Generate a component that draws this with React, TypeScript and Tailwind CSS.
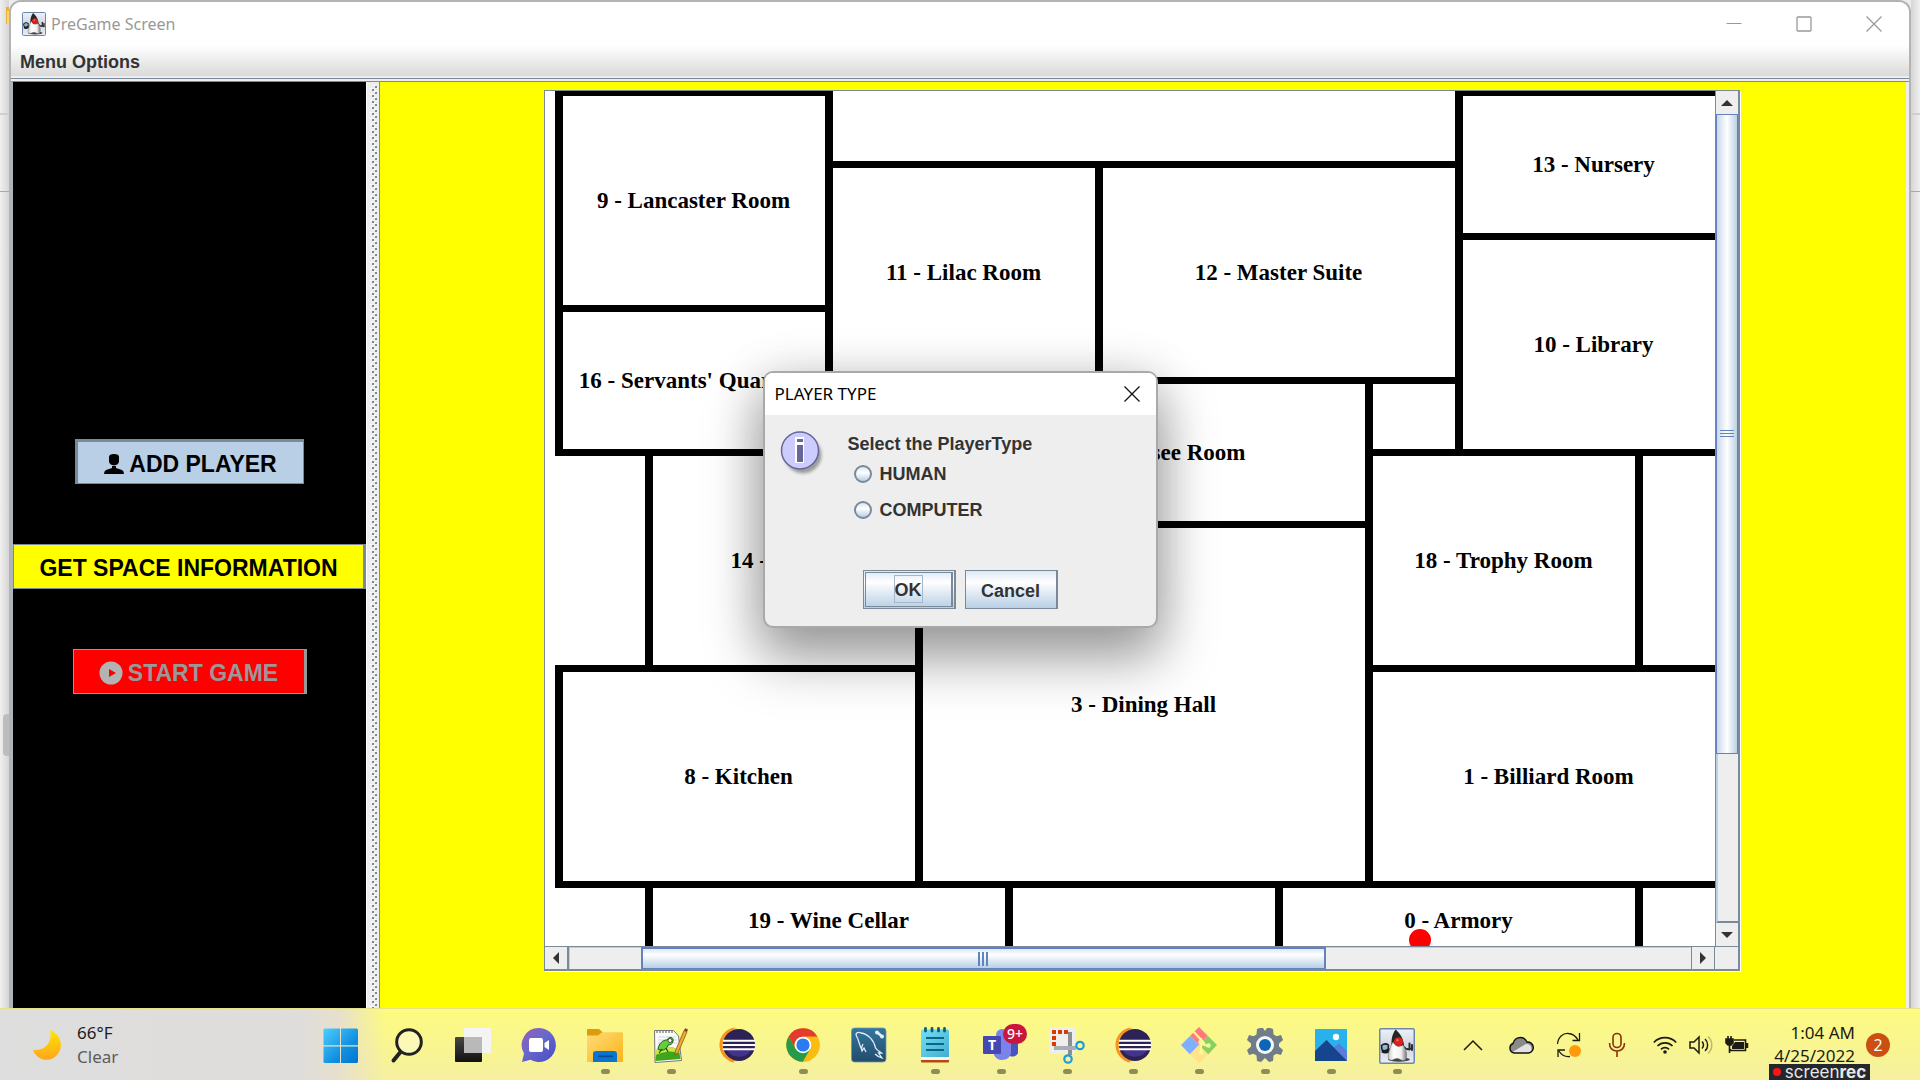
import React from "react";

type IconProps = { className?: string };

/* ---------- Java "Duke" icon ---------- */
function Duke({ className = "size-9" }: IconProps) {
  return (
    <svg viewBox="0 0 36 36" className={className} aria-hidden="true">
      <defs>
        <linearGradient id="dukeBg" x1="0" y1="0" x2="0" y2="1">
          <stop offset="0" stopColor="#eef1f7" />
          <stop offset="0.5" stopColor="#cfd5e2" />
          <stop offset="1" stopColor="#e9ecf3" />
        </linearGradient>
        <linearGradient id="dukeBelly" x1="0" y1="0" x2="1" y2="0">
          <stop offset="0" stopColor="#c9c9c9" />
          <stop offset="0.3" stopColor="#ffffff" />
          <stop offset="0.7" stopColor="#f1f1f1" />
          <stop offset="1" stopColor="#777" />
        </linearGradient>
      </defs>
      <rect x="0.75" y="0.75" width="34.5" height="34.5" rx="1.5" fill="url(#dukeBg)" stroke="#6d88a8" strokeWidth="1.5" />
      <ellipse cx="20" cy="31.5" rx="11" ry="2.2" fill="#444" />
      <path d="M2.5 17.500q3.500-3 7-.5l-.5 4.500q-3.500 2-6 .5z" fill="#8fb9d8" stroke="#1d1d1d" strokeWidth="1.500" />
      <path d="M3 23q5 3 10-3" stroke="#1d1d1d" strokeWidth="2.800" fill="none" />
      <path d="M24 18q4 5 8 2.500M30.500 15.500v6M33 17v5" stroke="#2a2a2a" strokeWidth="2" fill="none" strokeLinecap="round" />
      <path d="M16.500 1.500C14 5 12 10 12.500 18L25 20C25.500 12 21 5 16.500 1.500z" fill="#262626" />
      <path d="M14 14C11 19 8.500 26 9.500 31 13 34 15 30 18.500 30.500 21 30.500 23 34 27 31.500 28.500 26 27 21 24 17 20 19.500 16 18 14 14z" fill="url(#dukeBelly)" stroke="#666" strokeWidth="0.5" />
      <circle cx="19.500" cy="13.800" r="4.600" fill="#d9201c" />
      <circle cx="18.500" cy="12.300" r="1.300" fill="#f4645a" />
    </svg>
  );
}

/* ---------- Taskbar icons ---------- */
const box = "size-9 overflow-visible";

function StartIcon() {
  return (
    <svg viewBox="0 0 36 36" className={box}>
      <defs>
        <linearGradient id="win" gradientUnits="userSpaceOnUse" x1="0" y1="0" x2="36" y2="36">
          <stop offset="0" stopColor="#4fd0ff" />
          <stop offset="0.6" stopColor="#1090e0" />
          <stop offset="1" stopColor="#0072cf" />
        </linearGradient>
      </defs>
      <g fill="url(#win)">
        <path d="M1.500 .5H17v16.700H.5V1.500z" />
        <path d="M18 .5h16l1 1v15.700H18z" />
        <path d="M.5 18.500H17V35H1.500l-1-1z" />
        <path d="M18 18.500h17V34l-1 1H18z" />
      </g>
    </svg>
  );
}
function SearchIcon() {
  return (
    <svg viewBox="0 0 36 36" className={box} fill="none">
      <circle cx="20" cy="14" r="12.300" fill="#ffffff" fillOpacity=".35" stroke="#222" strokeWidth="3" />
      <path d="M11.500 24 4.500 32.500" stroke="#222" strokeWidth="4" strokeLinecap="round" />
    </svg>
  );
}
function TaskViewIcon() {
  return (
    <svg viewBox="0 0 36 36" className={box}>
      <defs>
        <linearGradient id="tv" x1="0" y1="0" x2="0" y2="1">
          <stop offset="0" stopColor="#474747" />
          <stop offset="1" stopColor="#111" />
        </linearGradient>
      </defs>
      <rect x="0" y="9" width="27" height="25" rx="1" fill="url(#tv)" />
      <rect x="9" y="0" width="27" height="25" rx="1" fill="#f4f4f4" />
      <rect x="9" y="9" width="18" height="16" fill="#b9b9b9" />
    </svg>
  );
}
function ChatIcon() {
  return (
    <svg viewBox="0 0 36 36" className={box}>
      <defs>
        <linearGradient id="chat" x1="0" y1="0" x2=".9" y2="1">
          <stop offset="0" stopColor="#9a5fae" />
          <stop offset="0.45" stopColor="#6a68cf" />
          <stop offset="1" stopColor="#4a4fc4" />
        </linearGradient>
      </defs>
      <path d="M18 0a17 17 0 1 1-8.500 31.800L1 34l2-8.500A17 17 0 0 1 18 0z" fill="url(#chat)" />
      <rect x="8" y="10" width="14" height="14" rx="2" fill="#fff" />
      <path d="M23.500 15l4.500-3v10l-4.500-3z" fill="#fff" />
    </svg>
  );
}
function ExplorerIcon() {
  return (
    <svg viewBox="0 0 36 36" className={box}>
      <defs>
        <linearGradient id="fold" x1="0" y1="0" x2="1" y2="1">
          <stop offset="0" stopColor="#ffdc78" />
          <stop offset="1" stopColor="#fbb418" />
        </linearGradient>
      </defs>
      <path d="M0 2a1 1 0 0 1 1-1h11l4 3.500V10H0z" fill="#dd9c0b" />
      <path d="M0 7.500h11l4-3.200h20a1 1 0 0 1 1 1V34H0z" fill="url(#fold)" />
      <path d="M6 34V26a3 3 0 0 1 3-3h18a3 3 0 0 1 3 3v8z" fill="#0a74cf" />
      <rect x="11" y="27.500" width="15" height="1.800" rx=".9" fill="#0a4c92" />
    </svg>
  );
}
function NotepadPlusIcon() {
  return (
    <svg viewBox="0 0 36 36" className={box}>
      <path d="M1.500 2.500h19l5 5.500 3 24.500-26.500 2z" fill="#fbfbfb" stroke="#777" />
      <path d="M4 3v2M7 3v2M10 3v2M13 3v2M16 3v2M19 3v2" stroke="#555" strokeWidth="1" />
      <path d="M5 9h18M5 12h19M5 15h19" stroke="#c5cdd8" strokeWidth=".8" />
      <path d="M3 22q11-7 23 0l1.500 9-25 2z" fill="#3fa51d" />
      <path d="M3 22q11-7 23 0l.5 3q-12-4-24 2z" fill="#c9e54a" />
      <path d="M5 21c1-6 5-9 9-9 2-4 7-3 6 1 0 3-3 4-5 4-1 4-5 6-8 5z" fill="#63cf3c" stroke="#174a12" strokeWidth=".9" />
      <circle cx="17" cy="12.500" r="2" fill="#fff" stroke="#222" strokeWidth=".7" />
      <path d="M9 21l-3 4M13 20l2 4" stroke="#174a12" strokeWidth="1.200" />
      <path d="M31 2.500l3 1.300L25 25l-3 2 .3-4z" fill="#f0a92c" stroke="#7a4a10" strokeWidth=".7" />
      <path d="M31 2.500l1-2.200 3 1.300-1 2.200z" fill="#7d3c3c" />
    </svg>
  );
}
function EclipseIcon() {
  return (
    <svg viewBox="0 0 36 36" className={box}>
      <path d="M18 .3A17 16.700 0 0 0 18 33.500A19 19 0 0 1 18 .3z" fill="#f7941e" />
      <path d="M15 .6A17 16.700 0 0 0 15 33.200" fill="none" stroke="#f7941e" strokeWidth="2.500" />
      <circle cx="20" cy="16.900" r="16" fill="#2c2255" />
      <path d="M8 22h24a13 11 0 0 1-24 0z" fill="#43338a" />
      <path d="M4 12.800h32M3.500 17h32.500M4 21.200h32" stroke="#fff" strokeWidth="2" />
    </svg>
  );
}
function ChromeIcon() {
  return (
    <svg viewBox="0 0 36 36" className={box}>
      <circle cx="18" cy="17" r="16.700" fill="#fbbc12" />
      <path d="M3.500 8.700A16.700 16.700 0 0 1 32.500 8.700H18A8.300 8.300 0 0 0 10.500 21z" fill="#e33b2e" />
      <path d="M3.500 8.700A16.700 16.700 0 0 0 18 33.700l7.300-12.500-14.500 0z" fill="#269a48" />
      <path d="M18 33.700A16.700 16.700 0 0 0 32.500 8.700H18l7.300 12.500z" fill="#fbbc12" />
      <circle cx="18" cy="17" r="8.300" fill="#fff" />
      <circle cx="18" cy="17" r="6.600" fill="#2a7cf0" />
    </svg>
  );
}
function MysqlIcon() {
  return (
    <svg viewBox="0 0 36 36" className={box} fill="none">
      <defs>
        <linearGradient id="mysql" x1="0" y1="0" x2="0" y2="1">
          <stop offset="0" stopColor="#34759e" />
          <stop offset="1" stopColor="#214d6b" />
        </linearGradient>
      </defs>
      <rect x=".5" y="0" width="34.500" height="34" rx="3" fill="url(#mysql)" stroke="#6f97b0" strokeWidth=".8" />
      <path d="M11 22C8 17 8 12 5.500 8 4 5 7 3.500 10 5c7 1 13 7 14.500 15 1 2 4 3.500 6 5l-3 0 3.500 5c-3-1-6-3-7-4M12 16c-1 2-2 5-1 7l2-3 2 4" stroke="#e3edf4" strokeWidth="1.300" />
      <path d="M26.500 4.500l5 4.500" stroke="#e3edf4" strokeWidth="2.600" />
      <circle cx="26" cy="4.500" r="2" fill="#e3edf4" />
      <circle cx="31" cy="8.500" r="2" fill="#e3edf4" />
    </svg>
  );
}
function NotepadIcon() {
  return (
    <svg viewBox="0 0 36 36" className={box}>
      <defs>
        <linearGradient id="np" x1="0" y1="0" x2="1" y2="1">
          <stop offset="0" stopColor="#72e0f4" />
          <stop offset="1" stopColor="#43add0" />
        </linearGradient>
      </defs>
      <path d="M4 30h28v3.500a1 1 0 0 1-1 1H5a1 1 0 0 1-1-1z" fill="#b54a0c" />
      <rect x="4" y="28" width="28" height="4" fill="#f5f5f5" />
      <path d="M4 3a1.500 1.500 0 0 1 1.500-1.500h25A1.500 1.500 0 0 1 32 3v26H4z" fill="url(#np)" />
      <path d="M9 10h18M9 16h18M9 22h18" stroke="#0b6584" strokeWidth="1.800" />
      <path d="M8.500 .5v2.500M15 .5v2.500M21.500 .5v2.500M27.500 .5v2.500" stroke="#0b5c79" strokeWidth="2.800" strokeLinecap="round" />
    </svg>
  );
}
function TeamsIcon() {
  return (
    <span className="relative">
      <svg viewBox="0 0 36 36" className={box}>
        <circle cx="19" cy="7" r="6" fill="#7b83eb" />
        <path d="M24 12h11v13a6 6 0 0 1-8 3z" fill="#4b53bc" />
        <path d="M11 12h17v13a9 8.500 0 0 1-17 2z" fill="#7b83eb" />
        <rect x="0" y="8" width="18" height="18" rx="1" fill="#4448b0" />
      </svg>
      <span className="absolute left-0 top-2 w-[18px] text-center font-['Noto_Sans'] text-sm leading-[18px] font-bold text-white">T</span>
      <span className="absolute -top-1 left-5 w-6 rounded-full bg-[#c8163c] text-center font-['Noto_Sans'] text-sm leading-5 font-medium text-white">9+</span>
    </span>
  );
}
function SnipIcon() {
  return (
    <svg viewBox="0 0 36 36" className={box} fill="none">
      <rect x="0" y="-1" width="27" height="27" rx="2" fill="#eeeeec" />
      <path d="M3 4h4M9 4h4M15 4h4M5 8v4M5 14v4" stroke="#d83b01" strokeWidth="4" />
      <path d="M19 6h2v21" stroke="#8a8f94" strokeWidth="4" />
      <path d="M7 18v2h20" stroke="#a9adb0" strokeWidth="4" />
      <circle cx="31" cy="17.500" r="3.700" stroke="#1c9be0" strokeWidth="2.200" />
      <circle cx="19" cy="31" r="3.700" stroke="#1c9be0" strokeWidth="2.200" />
    </svg>
  );
}
function GitIcon() {
  return (
    <svg viewBox="0 0 36 36" className={box}>
      <path d="M18-1l9 9-9 9-9-9z" fill="#ff7b7b" />
      <path d="M9 8l9 9-9 9.500L0 17z" fill="#7fb0ff" />
      <path d="M27 8l9 9-9 9.500-9-9.500z" fill="#85d062" />
      <path d="M18 17l9 9-9 9.500-9-9.500z" fill="#ffe28a" />
      <path d="M11 2l13 14M20 10v14M20 16l7 2" stroke="#fbf795" strokeWidth="2.200" />
      <circle cx="20" cy="14" r="2.600" fill="#fbf795" />
      <circle cx="27.500" cy="17.500" r="2.300" fill="#fbf795" />
      <circle cx="20" cy="24.500" r="2.500" fill="#fbf795" />
    </svg>
  );
}
function GearIcon() {
  return (
    <svg viewBox="0 0 36 36" className={box}>
      <path d="M13 0h3l2 3 2-3h3l3 1 .5 5.500 3 1.800L34 7l2 5-4 3.500v3L36 22l-2 5-4.500-1.300-3 1.800L26 33l-4 1-4-4-4 4-4-1-.5-5.500-3-1.800L2 27l-2-5 4-3.500v-3L0 12l2-5 4.500 1.300 3-1.800L10 1z" fill="#707c88" />
      <circle cx="18" cy="17" r="9" fill="#f7f7f7" />
      <circle cx="18" cy="17" r="6" fill="#0b66b8" />
    </svg>
  );
}
function PhotosIcon() {
  return (
    <svg viewBox="0 0 36 36" className={box}>
      <rect x="2" y="1" width="32" height="32" rx="1" fill="#28b1ea" />
      <path d="M15 24 26 15.500 34 23v10H15z" fill="#5a7cdc" />
      <path d="M2 23 13.500 12 34 33H2z" fill="#15458c" />
      <circle cx="23" cy="9" r="3.200" fill="#f5fbff" />
    </svg>
  );
}

const taskIcons: { name: string; icon: React.ReactNode; open?: boolean }[] = [
  { name: "Start", icon: <StartIcon /> },
  { name: "Search", icon: <SearchIcon /> },
  { name: "Task View", icon: <TaskViewIcon /> },
  { name: "Chat", icon: <ChatIcon /> },
  { name: "File Explorer", icon: <ExplorerIcon />, open: true },
  { name: "Notepad++", icon: <NotepadPlusIcon />, open: true },
  { name: "Eclipse Installer", icon: <EclipseIcon /> },
  { name: "Chrome", icon: <ChromeIcon />, open: true },
  { name: "MySQL Workbench", icon: <MysqlIcon /> },
  { name: "Notepad", icon: <NotepadIcon />, open: true },
  { name: "Teams", icon: <TeamsIcon />, open: true },
  { name: "Snipping Tool", icon: <SnipIcon />, open: true },
  { name: "Eclipse", icon: <EclipseIcon />, open: true },
  { name: "Git", icon: <GitIcon />, open: true },
  { name: "Settings", icon: <GearIcon />, open: true },
  { name: "Photos", icon: <PhotosIcon />, open: true },
  { name: "PreGame Screen", icon: <Duke className={box} />, open: true },
];

function Tray() {
  return (
    <div className="ml-auto flex h-full items-center text-[#1c1c14]">
      <button aria-label="Show hidden icons" className="flex w-12 justify-center">
        <svg viewBox="0 0 20 20" className="size-5" fill="none" stroke="currentColor" strokeWidth="1.500"><path d="M1 15l9-9 9 9" /></svg>
      </button>
      <button aria-label="OneDrive" className="flex w-12 justify-center">
        <svg viewBox="0 0 26 20" className="h-5 w-[26px]">
          <path d="M6 18a5 5 0 0 1-1-9.500C6 5 9 2.500 12.500 2.500c3 0 5 1.500 6.500 4.500a5.500 5.500 0 0 1 1.500 11z" fill="#8a8a88" />
          <path d="M4.500 17 17 9.500c3-1.500 6 .5 6.500 3.500s-1 4.500-3 5H6z" fill="#e2e2e0" />
          <path d="M6 18a5 5 0 0 1-1-9.500C6 5 9 2.500 12.500 2.500c3 0 5 1.500 6.500 4.500a5.500 5.500 0 0 1 1.500 11z" fill="none" stroke="#111" strokeWidth="1.400" />
        </svg>
      </button>
      <button aria-label="Updates" className="flex w-12 justify-center">
        <svg viewBox="0 0 26 26" className="size-[26px]" fill="none" stroke="#1c1c14" strokeWidth="1.300">
          <path d="M1.500 12C2 5 7 1 12.500 1.500c4 0 7 2.500 9.500 6.500M23.500 1v7.500h-7" />
          <path d="M2 25v-7h7M3 19c3 5 7 6 11 5.500" />
          <circle cx="19" cy="19" r="6" fill="#ff9a0a" stroke="none" />
        </svg>
      </button>
      <button aria-label="Microphone in use" className="flex w-12 justify-center">
        <svg viewBox="0 0 18 26" className="h-[26px] w-[18px]" fill="none" stroke="#8c3008" strokeWidth="1.600">
          <rect x="5" y="1.500" width="8" height="14" rx="4" />
          <path d="M1.500 11c0 5 3 8 7.500 8s7.500-3 7.500-8M9 19v6" />
        </svg>
      </button>
      <button aria-label="Network, volume and battery" className="flex w-[104px] items-center gap-3 pl-3">
        <svg viewBox="0 0 24 18" className="h-[18px] w-6 shrink-0" fill="none" stroke="currentColor" strokeWidth="1.700">
          <path d="M.8 6.500a15.500 15.500 0 0 1 22.400 0M4.500 10a10.500 10.500 0 0 1 15 0M8 13.300a5.800 5.800 0 0 1 8 0" />
          <circle cx="12" cy="16" r="1.800" fill="currentColor" stroke="none" />
        </svg>
        <svg viewBox="0 0 24 20" className="h-5 w-6 shrink-0" fill="none" stroke="currentColor" strokeWidth="1.500">
          <path d="M1 7h4l5-5v16l-5-5H1z" />
          <path d="M13 6.500c2 2 2 5 0 7M16 4c3.500 3 3.500 9 0 12" />
          <path d="M19 1.500c5 4.500 5 12.500 0 17" stroke="#bdb96a" />
        </svg>
        <svg viewBox="0 0 24 20" className="h-5 w-6 shrink-0" fill="none" stroke="currentColor" strokeWidth="1.600">
          <path d="M9 5h11.500v10.500H5.500V14" />
          <path d="M10 7h9v7H7v-3z" fill="currentColor" stroke="none" />
          <path d="M22 8v5" strokeWidth="2.500" />
          <path d="M1 4h7v4l-2 2H3L1 8zM3 4V1M6 4V1" fill="currentColor" />
          <path d="M4.500 9v9" />
        </svg>
      </button>
      <div className="relative flex h-full w-[110px] flex-col items-end pt-3 font-['Noto_Sans',sans-serif] text-[17px] leading-[23px]">
        <span>1:04 AM</span>
        <span>4/25/2022</span>
        <div className="absolute bottom-0 left-6 flex h-4 w-[101px] items-center justify-center gap-1 bg-[#24272b] font-['Inter',sans-serif] text-[17px] leading-4 text-[#e8e8e8]">
          <i className="size-2 rounded-full bg-[#ff1414]" />
          <span>screen<b>rec</b></span>
        </div>
      </div>
      <button aria-label="2 notifications" className="mr-[30px] ml-[11px] size-6 rounded-full bg-[#cb4f10] font-['Noto_Sans'] text-base leading-6 text-white">2</button>
    </div>
  );
}

/* ---------- Board ---------- */
/* One grid unit is 90 x 72; a room's walls overlap the walls of the rooms after it. */
const room = "relative -mr-2 -mb-[7px] flex items-center justify-center border-x-8 border-y-[7px] border-black whitespace-nowrap";

const rooms: { id: string; label: string; place: string; pawn?: boolean }[] = [
  { id: "9", label: "9 - Lancaster Room", place: "col-[1/span_3] row-[1/span_3]" },
  { id: "hall", label: "", place: "col-[4/span_7] row-[1/span_1] border-t-0" },
  { id: "13", label: "13 - Nursery", place: "col-[11/span_3] row-[1/span_2]" },
  { id: "16", label: "16 - Servants' Quarters", place: "col-[1/span_3] row-[4/span_2]" },
  { id: "11", label: "11 - Lilac Room", place: "col-[4/span_3] row-[2/span_3]" },
  { id: "12", label: "12 - Master Suite", place: "col-[7/span_4] row-[2/span_3]" },
  { id: "10", label: "10 - Library", place: "col-[11/span_3] row-[3/span_3]" },
  { id: "17", label: "17 - Tennessee Room", place: "col-[5/span_5] row-[5/span_2]" },
  { id: "14", label: "14 - Parlor", place: "col-[2/span_3] row-[6/span_3]" },
  { id: "18", label: "18 - Trophy Room", place: "col-[10/span_3] row-[6/span_3]" },
  { id: "3", label: "3 - Dining Hall", place: "col-[5/span_5] row-[7/span_5]" },
  { id: "8", label: "8 - Kitchen", place: "col-[1/span_4] row-[9/span_3]" },
  { id: "1", label: "1 - Billiard Room", place: "col-[10/span_4] row-[9/span_3]" },
  { id: "19", label: "19 - Wine Cellar", place: "col-[2/span_4] row-[12/span_1]" },
  { id: "0", label: "0 - Armory", place: "col-[9/span_4] row-[12/span_1]", pawn: true },
];

function Arrow({ dir }: { dir: "up" | "down" | "left" | "right" }) {
  const d = { up: "M6 3l6 6H0z", down: "M0 3h12L6 9z", left: "M9 0v12L3 6z", right: "M3 0l6 6-6 6z" }[dir];
  return (
    <svg viewBox="0 0 12 12" className="size-3" aria-hidden="true">
      <path d={d} fill="#333" />
    </svg>
  );
}

const scrollBtn = "flex shrink-0 items-center justify-center bg-[#eee]";

function Board() {
  return (
    <div className="grid w-[1196px] max-w-full shrink-0 grid-cols-[minmax(0,1fr)_23px] grid-rows-[855px_23px] border border-[#7a8a99] border-r-2 border-b-2 shadow-[1px_1px_0_#fff]">
      <div className="overflow-hidden bg-white pl-[10px]">
        <div className="-mt-[2px] grid w-max grid-cols-[repeat(13,90px)] grid-rows-[repeat(12,72px)] font-['Liberation_Serif',serif] text-[23px] leading-6 font-bold text-black">
          {rooms.map((r) => (
            <div key={r.id} className={`${room} ${r.place}`}>
              {r.label}
              {r.pawn && <span className="absolute top-[41px] left-[126px] size-[22px] rounded-full bg-[#f00]" />}
            </div>
          ))}
        </div>
      </div>
      <div className="flex flex-col border-l border-[#7a8a99] bg-[#eee]">
        <button aria-label="Scroll up" className={`${scrollBtn} h-[23px]`}><Arrow dir="up" /></button>
        <div className="flex h-[640px] flex-col items-center justify-center gap-px border border-[#6382bf] bg-linear-to-r from-[#c8d9ec] via-white to-[#bcd0e4]">
          {[0, 1, 2].map((i) => (
            <i key={i} className="mb-px h-px w-[14px] bg-[#6382bf]" />
          ))}
        </div>
        <div className="flex-1 border-b-2 border-l-2 border-b-[#7a8a99] border-l-[#b8cfe5]" />
        <button aria-label="Scroll down" className={`${scrollBtn} h-[23px]`}><Arrow dir="down" /></button>
      </div>
      <div className="flex border-t border-[#7a8a99] bg-[#eee]">
        <button aria-label="Scroll left" className={`${scrollBtn} w-6 border-r-2 border-[#7a8a99]`}><Arrow dir="left" /></button>
        <div className="w-[72px] shrink-0 border-t border-l border-[#b8cfe5]" />
        <div className="flex w-[685px] min-w-0 items-center justify-center gap-[2px] border-2 border-b border-[#6382bf] bg-linear-to-b from-[#dce7f3] via-white via-30% to-[#b8cfe5]">
          {[0, 1, 2].map((i) => (
            <i key={i} className="h-[14px] w-[2px] bg-[#6382bf]" />
          ))}
        </div>
        <div className="flex-1 border-t border-[#b8cfe5]" />
        <button aria-label="Scroll right" className={`${scrollBtn} w-6 border-x border-[#7a8a99]`}><Arrow dir="right" /></button>
      </div>
      <div className="border-t border-[#7a8a99] bg-[#eee]" />
    </div>
  );
}

/* ---------- Dialog ---------- */
const swingBtn = "flex h-[39px] w-[93px] items-center justify-center border border-[#7a8a99] bg-linear-to-b from-[#dde8f3] via-white via-30% to-[#b8cfe5]";
const radio = "size-[18px] appearance-none rounded-full border-2 border-[#7a8a99] bg-linear-to-b from-[#dbe6f2] via-white via-40% to-[#b8cfe5] checked:bg-[#333]";

function PlayerTypeDialog() {
  return (
    <div role="dialog" aria-labelledby="dialog-title" className="w-[395px] overflow-hidden rounded-[10px] border-2 border-[#a9a9a9] bg-[#eee] shadow-[0_28px_54px_4px_rgba(0,0,0,0.36),0_2px_50px_rgba(0,0,0,0.12)]">
      <div className="flex h-[42px] items-center justify-between bg-white pr-4 pl-[10px]">
        <h2 id="dialog-title" className="font-['Noto_Sans',sans-serif] text-[17px] text-black">PLAYER TYPE</h2>
        <button aria-label="Close">
          <svg viewBox="0 0 16 16" className="size-4" fill="none" stroke="#111" strokeWidth="1.300"><path d="M.5.5l15 15M15.500.5l-15 15" /></svg>
        </button>
      </div>
      <form className="font-['Liberation_Sans',sans-serif] text-lg leading-6 font-bold text-[#333]">
        <div className="flex gap-6 pt-4 pl-[15px]">
          <svg viewBox="0 0 44 46" className="h-[46px] w-11" aria-hidden="true">
            <defs>
              <filter id="infoShadow" x="-20%" y="-20%" width="150%" height="150%"><feGaussianBlur stdDeviation="1.800" /></filter>
            </defs>
            <circle cx="23" cy="24" r="18.500" fill="#888" opacity=".8" filter="url(#infoShadow)" />
            <circle cx="20" cy="19.500" r="18.500" fill="#ccccff" stroke="#666699" strokeWidth="1.500" />
            <path d="M15 6h9v26h-9z" fill="#fff" />
            <path d="M17 8h6v3h-6zM17 14h6v17h-6z" fill="#666699" />
          </svg>
          <fieldset>
            <legend className="pt-px">Select the PlayerType</legend>
            <label className="flex h-9 items-center gap-2 pl-[6px]"><input type="radio" name="player" className={radio} />HUMAN</label>
            <label className="flex h-9 items-center gap-2 pl-[6px]"><input type="radio" name="player" className={radio} />COMPUTER</label>
          </fieldset>
        </div>
        <div className="mt-[42px] mb-[17px] flex justify-center gap-[9px]">
          <button type="button" className={`${swingBtn} border-r-2 p-px`}>
            <span className="flex size-full items-center justify-center border border-r-2 border-[#7a8a99]">
              <span className="border border-[#a3b8cc] pt-[2px]">OK</span>
            </span>
          </button>
          <button type="button" className={`${swingBtn} border-r-2 pt-[3px]`}>Cancel</button>
        </div>
      </form>
    </div>
  );
}

function Divider() {
  return (
    <svg className="h-full w-[14px] shrink-0 bg-[#eee]" aria-hidden="true">
      <defs>
        <pattern id="bumps" width="14" height="6" patternUnits="userSpaceOnUse">
          <path d="M4 0h2v1h-2zM8 3h2v1h-2z" fill="#fff" />
          <path d="M6 1h2v2h-2zM9 4h2v2h-2z" fill="#7a8a99" />
        </pattern>
      </defs>
      <rect y="3" width="14" height="100%" fill="url(#bumps)" />
      <rect width="1" height="100%" fill="#fff" />
      <rect x="13" width="1" height="100%" fill="#7a8a99" />
    </svg>
  );
}

const sideBtn = "flex h-[45px] items-center justify-center gap-[5px] border pt-[3px] font-['Liberation_Sans',sans-serif] text-[23px] leading-6 font-bold whitespace-nowrap";

function DeskEdge({ left = false }: { left?: boolean }) {
  return (
    <div className={`relative flex w-[9px] shrink-0 flex-col ${left ? "bg-linear-to-r" : "bg-linear-to-l"} from-[#f0f0f0] to-[#d6d6d6]`}>
      <div className="h-[115px] border-b-2 border-[#cfcfcf]" />
      <div className="h-[77px] border-b border-[#a8a8a8]" />
      {left && <i className="absolute top-[7px] right-0 h-[17px] w-[3px] border-t-4 border-l border-[#eeb030] bg-[#f8d775]" />}
      {left && <i className="absolute top-[714px] right-0 h-[42px] w-[6px] rounded-l-sm bg-[#bdbdbd]" />}
    </div>
  );
}

export default function App() {
  return (
    <div className="flex h-screen min-h-[1080px] flex-col overflow-hidden bg-[#ececec]">
      <div className="flex min-h-0 flex-1">
        <DeskEdge left />
        <div className="relative flex min-w-0 flex-1 flex-col overflow-hidden rounded-t-xl border-2 border-b-0 border-[#b3b3b3] bg-[#eee]">
          <header className="flex h-[43px] shrink-0 items-center bg-white pl-[11px] text-[#999]">
            <Duke className="size-6" />
            <h1 className="ml-[5px] font-['Noto_Sans',sans-serif] text-base">PreGame Screen</h1>
            <div className="ml-auto flex gap-[54px] pr-[27px]">
              <button aria-label="Minimize"><svg viewBox="0 0 16 16" className="size-4" fill="none" stroke="currentColor"><path d="M.5 7.500h15" /></svg></button>
              <button aria-label="Maximize"><svg viewBox="0 0 16 16" className="size-4" fill="none" stroke="currentColor" strokeWidth="1.300"><rect x="1" y="1" width="14" height="14" rx="1" /></svg></button>
              <button aria-label="Close"><svg viewBox="0 0 16 16" className="size-4" fill="none" stroke="currentColor" strokeWidth="1.300"><path d="M.5.5l15 15M15.500.5l-15 15" /></svg></button>
            </div>
          </header>
          <nav className="h-[31px] shrink-0 bg-linear-to-b from-white to-[#dadada] pt-px pl-[9px] font-['Liberation_Sans',sans-serif] text-lg leading-8 font-bold text-[#333]">
            <button>Menu Options</button>
          </nav>
          <main className="flex min-h-0 flex-1 flex-col pt-[2px]">
            <div className="mb-px h-[2px] shrink-0 border-t border-[#7a8a99] bg-[#eee]" />
            <div className="flex min-h-0 flex-1 border-t border-l-2 border-t-[#7a8a99] border-l-[#a8b6c4] pr-px">
              <aside className="flex w-[353px] shrink-0 flex-col items-center justify-center gap-[60px] bg-black pt-[42px]">
                <button className={`${sideBtn} w-[229px] border-t-[3px] border-l-[3px] border-[#7a8a99] bg-[#b8cfe5] text-black`}>
                  <svg viewBox="0 0 20 20" className="size-5" aria-hidden="true"><path d="M5 3q0-3 5-3t5 3v5q-1 3-5 3.500Q6 11 5 8zM8 12h4v2l6 2q2 1 2 4H0q0-3 2-4l6-2z" /></svg>
                  ADD PLAYER
                </button>
                <button className={`${sideBtn} w-full border-r-[3px] border-[#7a8a99] bg-[#ff0] text-black`}>GET SPACE INFORMATION</button>
                <button disabled className={`${sideBtn} w-[234px] border-r-[3px] border-[#999] bg-[#f00] text-[#999]`}>
                  <svg viewBox="0 0 24 24" className="size-6" aria-hidden="true"><circle cx="12" cy="12" r="11.500" fill="#b3b3b3" /><path d="M10 8l7 4-7 4z" fill="#f00" /></svg>
                  START GAME
                </button>
              </aside>
              <Divider />
              <section className="flex min-w-0 flex-1 items-start justify-center overflow-hidden border-r-2 border-[#eee] bg-[#ff0] pt-2 pr-[3px]">
                <Board />
              </section>
            </div>
          </main>
          <div className="absolute inset-0 flex items-center justify-center pb-3">
            <PlayerTypeDialog />
          </div>
        </div>
        <DeskEdge />
      </div>
      <footer className="flex h-[72px] shrink-0 items-center border-t border-[#e6e28a] bg-[linear-gradient(90deg,#dedede_0,#dfdddb_300px,#e8e0cc_340px,#f8f49000_385px),linear-gradient(#fdfb80,#f5f0a0)]">
        <div className="flex w-[308px] shrink-0 items-center gap-4 pl-[33px] font-['Noto_Sans',sans-serif] text-[17px] leading-6">
          <svg viewBox="0 0 28 30" className="h-[30px] w-7" aria-hidden="true">
            <defs><linearGradient id="moon" x1="0" y1="0" x2="0" y2="1"><stop offset="0" stopColor="#ffe600" /><stop offset="1" stopColor="#ffa51f" /></linearGradient></defs>
            <path d="M17 0C30 5 31 20 22 27 14 33 3 29 0 20 12 21 20 12 17 0z" fill="url(#moon)" />
          </svg>
          <p className="flex flex-col"><span className="text-[#1c1c1c]">66°F</span><span className="text-[#5c5c5c]">Clear</span></p>
        </div>
        <nav className="flex h-full" aria-label="Taskbar">
          {taskIcons.map((t) => (
            <button key={t.name} aria-label={t.name} className="flex w-[66px] flex-col items-center gap-[5px] pt-[19px]">
              {t.icon}
              {t.open && <i className="h-[5px] w-[9px] rounded-full bg-[#8f8c55]" />}
            </button>
          ))}
        </nav>
        <Tray />
      </footer>
    </div>
  );
}
